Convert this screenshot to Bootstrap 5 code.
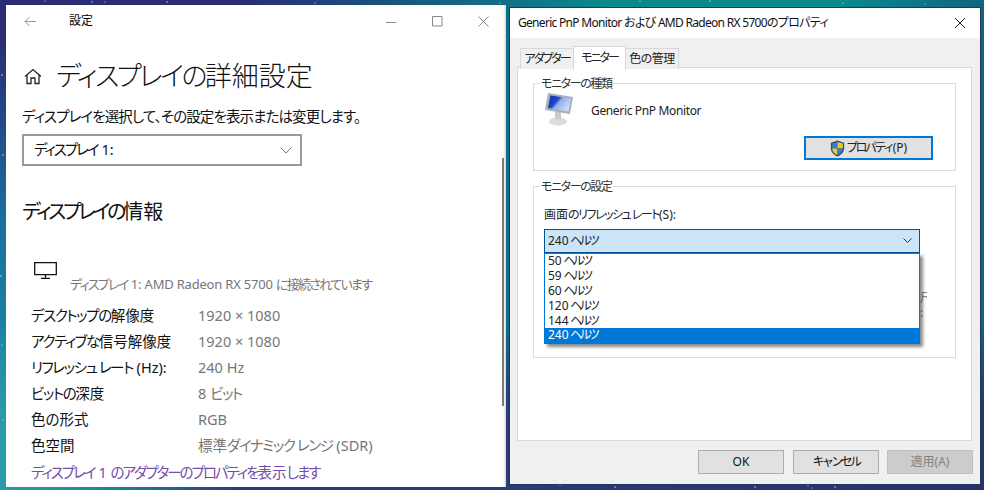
<!DOCTYPE html>
<html lang="ja">
<head>
<meta charset="utf-8">
<link href="https://cdn.jsdelivr.net/npm/bootstrap@5.3.0/dist/css/bootstrap.min.css" rel="stylesheet">
<style>
html,body{height:100%;margin:0;overflow:hidden}
body{width:984px;height:490px;position:relative;font-family:"Noto Sans","Noto Sans CJK JP",sans-serif;font-feature-settings:"palt";color:#000;
background:
linear-gradient(180deg,transparent 8%,#1a6f9e 45%,#1d86a4 75%) 0 0/8px 100% no-repeat,
linear-gradient(90deg,#2a2c74 0,#2a2c74 24%,#1b4f7c 38%,#0a8a8c 62%,#0b8a8e 85%,#10647f 100%)}
.desk-bottom{position:absolute;left:0;right:0;bottom:0;height:170px;background:linear-gradient(90deg,#2a9aa8 0,#1f8a9c 10%,#2a3f7a 24%,#2e2f70 100%);-webkit-mask-image:linear-gradient(180deg,transparent 0,#000 55%);mask-image:linear-gradient(180deg,transparent 0,#000 55%)}
.desk-stars{position:absolute;inset:0}
.win{position:absolute;background:#fff;display:flex;flex-direction:column}
.win-settings{left:6px;top:5px;width:500px;height:482px;box-shadow:inset -3px 0 3px -2px #ccc}
.win-dialog{left:510px;top:8px;width:470px;height:476px;background:#f0f0f0;box-shadow:0 0 0 1px #1d3a55}
.set-title{height:32px;padding-left:18px;font-size:12px}
.set-title .ttl{margin-left:33px}
.caps{margin-left:auto;gap:0}
.cap-btn{width:46px;height:32px;display:flex;align-items:center;justify-content:center}
.set-body{padding:0 0 0 16px;flex:1}
.set-h1{font-size:27px;font-weight:300;line-height:36px;margin:21px 0 0;color:#111;display:flex;align-items:center}
.set-h1 svg{margin-right:14px;margin-left:2px}
.set-h1 .kn{letter-spacing:-2.6px}
.set-p{font-size:14.5px;line-height:20px;margin:12px 0 0;color:#111;letter-spacing:-.9px}
.set-select{width:280px;height:32px;border:2px solid #999;margin-top:8px;padding:0 8px 0 10px;font-size:14.5px;color:#111}
.set-select .kn{letter-spacing:-2px}
.set-h2{font-size:20px;font-weight:400;line-height:28px;margin:32px 0 0;color:#111}
.set-h2 .kn{letter-spacing:-3.2px}
.mon-line{margin:36px 0 0 12px;height:36px;position:relative}
.mon-text{font-size:13px;color:#767676;padding:13px 0 0 36px;line-height:18px;margin:0;letter-spacing:-.2px}
.mon-text .kn{letter-spacing:-1.7px}
.spec{margin:4px 0 0 9px;font-size:14.5px;line-height:26px}
.spec-row{display:flex;height:26px}
.spec-k{width:167px;color:#111}
.spec-k .kn,.spec-v .kn{letter-spacing:-1.4px}
.spec-v{color:#767676}
.set-link{display:block;margin:1px 0 0 9px;font-size:14.5px;line-height:26px;color:#744da9;text-decoration:none}
.set-link .kn{letter-spacing:-2px}
.scroll-thumb{position:absolute;left:496px;top:153px;width:2px;height:248px;background:#7a7a7a}
.dlg-title{height:30px;background:#fff;font-size:12px;padding-left:8px;color:#111;letter-spacing:-.7px}
.dlg-close{margin-left:auto;margin-right:13px}
.dlg-main{flex:1;padding:8px 8px 0 7px;position:relative}
.nav-tabs.tabbar{border-bottom:0;height:22px;padding-left:3px;align-items:flex-end;font-size:12px;position:relative;z-index:2;margin-bottom:-1px}
.tabbar .nav-link{padding:0;width:54px;text-align:center;height:21px;line-height:20px;color:#222;background:#f0f0f0;border:1px solid #d9d9d9;border-bottom:0;border-radius:0;margin:0 0 1px 0;letter-spacing:-.5px}
.tabbar .kn{letter-spacing:-2.1px}
.tabbar .nav-link.active{width:53px;height:24px;line-height:22px;background:#fff;border-color:#d9d9d9;margin:0 -1px 0 -1px;position:relative;z-index:1;color:#222}
.tab-page{height:374px;background:#fff;border:1px solid #d9d9d9;padding:6px 15px 0 15px}
.grp{border:1px solid #dcdcdc;padding:0 10px;margin:0;font-size:12px}
.grp legend{float:none;width:auto;font-size:12px;line-height:16px;margin:0 0 0 -4px;padding:2px 1px 0;color:#333;letter-spacing:-1.4px}
.grp-a{height:97px}
.grp-b{height:181px;margin-top:6px;position:relative}
.mon-row{display:flex;align-items:center;gap:18px;margin-top:-1px;height:36px;font-size:12px;color:#222;padding-left:1px;letter-spacing:-.35px}
.mon-row span{padding-top:4px}
.prop-btn{width:129px;height:24px;border:2px solid #0078d7;border-radius:0;background:#e1e1e1;padding:0;font-size:12px;line-height:18px;color:#222;margin:9px 0 0 260px;display:flex;align-items:center;justify-content:center;gap:1px}
.prop-btn .kn{letter-spacing:-2.5px}
.rate-lbl{margin:12px 0 0;line-height:16px;color:#222}
.rate-lbl .kn{letter-spacing:-1.5px}
.combo{width:376px;height:24px;margin-top:6px;background:#cce4f7;border:1px solid #005499;padding:0 7px 0 3px;color:#222;font-size:12px;word-spacing:-1.5px}
.hz{letter-spacing:-2.5px}
.drop{position:absolute;left:10px;top:58px;width:376px;margin-top:0;border:1px solid #0078d7;border-radius:0;background:#fff;box-shadow:3px 3px 3px rgba(0,0,0,.45);z-index:3}
.drop .list-group-item{border:0;border-radius:0;padding:0 0 0 3px;height:15px;line-height:13px;font-size:12px;color:#222;background:transparent;word-spacing:-1.5px}
.drop .list-group-item.active{background:#0078d7;color:#fff}
.behind{position:absolute;left:386px;top:95px;font-size:12px;line-height:15px;color:#8a8a8a;width:7px;overflow:hidden;white-space:nowrap}
.dlg-foot{height:43px;padding:9px 0 0 0;gap:8px;justify-content:flex-end;margin-right:-1px}
.wbtn{width:86px;height:24px;padding:0;border:1px solid #adadad;border-radius:0;background:#e1e1e1;font-size:12px;line-height:20px;color:#111}
.wbtn .kn{letter-spacing:-2.6px}
.wbtn-ok{margin-right:1px}
.wbtn.btn:disabled{background:#ccc;border-color:#bfbfbf;color:#838383;opacity:1}
</style>
</head>
<body>
<div class="desk-bottom"></div>
<svg class="desk-stars" width="984" height="490" viewBox="0 0 984 490" fill="#cfe6ff">
<circle cx="45" cy="1" r=".6"/><circle cx="92" cy="2" r=".7"/><circle cx="105" cy="2" r=".6"/><circle cx="167" cy="2" r=".7"/><circle cx="315" cy="3" r=".6"/><circle cx="500" cy="3" r=".6"/><circle cx="640" cy="1" r=".6"/><circle cx="710" cy="1" r=".7"/><circle cx="843" cy="3" r=".6"/><circle cx="925" cy="4" r=".6"/>
<circle cx="2" cy="75" r=".7"/><circle cx="3" cy="155" r=".7"/><circle cx="1" cy="276" r=".7"/><circle cx="2" cy="345" r=".6"/><circle cx="3" cy="420" r=".6"/>
<circle cx="560" cy="485" r=".6"/><circle cx="615" cy="487" r=".7"/><circle cx="755" cy="487" r=".7"/><circle cx="808" cy="485" r=".7"/><circle cx="812" cy="488" r=".6"/><circle cx="835" cy="487" r=".7"/>
</svg>

<section class="win win-settings">
  <div class="set-title d-flex align-items-center">
    <svg width="12" height="11" viewBox="0 0 12 11" fill="none" stroke="#999" stroke-width="1"><path d="M12 5.500H1M5.500 1 1 5.500 5.500 10"/></svg>
    <span class="ttl">設定</span>
    <div class="caps d-flex">
      <div class="cap-btn"><svg width="11" height="11" fill="none" stroke="#888"><path d="M0 6.500h10"/></svg></div>
      <div class="cap-btn"><svg width="11" height="11" fill="none" stroke="#888"><path d="M.5.500h9.500v9.500h-9.500z"/></svg></div>
      <div class="cap-btn"><svg width="11" height="11" fill="none" stroke="#888"><path d="M.5.500l10 10M10.500.500l-10 10"/></svg></div>
    </div>
  </div>
  <div class="set-body">
    <h1 class="set-h1"><svg width="18" height="17" viewBox="0 0 18 17" fill="none" stroke="#222" stroke-width="1.300"><path d="M1 8.500 9 1.500l8 7M3 7v8.500h4V10h4v5.500h4V7"/></svg><span><span class="kn">ディスプレイの</span>詳細設定</span></h1>
    <p class="set-p">ディスプレイを選択して、その設定を表示または変更します。</p>
    <div class="set-select d-flex align-items-center justify-content-between">
      <span><span class="kn">ディスプレイ</span> 1:</span>
      <svg width="12" height="7" viewBox="0 0 12 7" fill="none" stroke="#777"><path d="M.5.500 6 6 11.500.5"/></svg>
    </div>
    <h2 class="set-h2"><span class="kn">ディスプレイの</span>情報</h2>
    <div class="mon-line">
      <svg class="d-block position-absolute top-0 start-0" width="23" height="17" viewBox="0 0 23 17" fill="none" stroke="#111" stroke-width="1.300"><path d="M.7.700h21.600v12H.7zM11.500 13v3M7 16.300h9"/></svg>
      <p class="mon-text"><span class="kn">ディスプレイ</span> 1: AMD Radeon RX 5700 <span class="kn">に接続されています</span></p>
    </div>
    <div class="spec">
      <div class="spec-row"><span class="spec-k"><span class="kn">デスクトップの</span>解像度</span><span class="spec-v">1920 × 1080</span></div>
      <div class="spec-row"><span class="spec-k"><span class="kn">アクティブな</span>信号解像度</span><span class="spec-v">1920 × 1080</span></div>
      <div class="spec-row"><span class="spec-k"><span class="kn">リフレッシュ レート</span> (Hz):</span><span class="spec-v">240 Hz</span></div>
      <div class="spec-row"><span class="spec-k"><span class="kn">ビットの</span>深度</span><span class="spec-v">8 <span class="kn">ビット</span></span></div>
      <div class="spec-row"><span class="spec-k">色の形式</span><span class="spec-v">RGB</span></div>
      <div class="spec-row"><span class="spec-k">色空間</span><span class="spec-v">標準<span class="kn">ダイナミック レンジ</span> (SDR)</span></div>
    </div>
    <a class="set-link" href="#"><span class="kn">ディスプレイ</span> 1 <span class="kn">のアダプターのプロパティを</span>表示<span class="kn">します</span></a>
  </div>
  <div class="scroll-thumb"></div>
</section>

<section class="win win-dialog">
  <div class="dlg-title d-flex align-items-center">
    <span>Generic PnP Monitor および AMD Radeon RX 5700のプロパティ</span>
    <svg class="dlg-close" width="13" height="13" viewBox="0 0 13 13" fill="none" stroke="#222"><path d="M1 1l10 10M11 1 1 11"/></svg>
  </div>
  <div class="dlg-main">
    <ul class="nav nav-tabs tabbar">
      <li class="nav-item"><a class="nav-link" href="#"><span class="kn">アダプター</span></a></li>
      <li class="nav-item"><a class="nav-link active" href="#"><span class="kn">モニター</span></a></li>
      <li class="nav-item"><a class="nav-link" href="#">色の管理</a></li>
    </ul>
    <div class="tab-page">
      <fieldset class="grp grp-a">
        <legend>モニターの種類</legend>
        <div class="mon-row">
          <svg width="28" height="33" viewBox="0 0 28 33">
            <defs><linearGradient id="scr" x1="0" y1="0" x2="1" y2=".6"><stop offset="0" stop-color="#0a2fb0"/><stop offset=".42" stop-color="#1b49c8"/><stop offset=".55" stop-color="#8fb0ea"/><stop offset="1" stop-color="#cfdcf5"/></linearGradient></defs>
            <ellipse cx="13" cy="28.500" rx="9" ry="4" fill="#dcdcdc"/><path d="M10 19h6v7h-6z" fill="#c9c9c9"/>
            <path d="M3 0 28 4 25 21 0 17z" fill="#a9b0b8"/><path d="M5.500 2.500 26 5.500 23.500 18.500 3 15z" fill="url(#scr)"/>
          </svg>
          <span>Generic PnP Monitor</span>
        </div>
        <button type="button" class="btn prop-btn">
          <svg width="15" height="17" viewBox="0 0 15 18"><path d="M7.500.5 14.500 3v6c0 4-3.500 7-7 8.500C4 16 .5 13 .5 9V3z" fill="#2f4a68"/><path d="M7.500 2 7.500 9H1.800V3.600z" fill="#2f7fd0"/><path d="M7.500 2 13.200 3.600V9H7.500z" fill="#f4c430"/><path d="M1.800 9H7.500v7C5 15 2 13 1.800 9z" fill="#f4c430"/><path d="M7.500 9h5.700c-.2 4-3.200 6-5.700 7z" fill="#2f7fd0"/></svg>
          <span><span class="kn">プロパティ</span>(P)</span>
        </button>
      </fieldset>
      <fieldset class="grp grp-b">
        <legend>モニターの設定</legend>
        <div class="rate-lbl">画面<span class="kn">のリフレッシュ レート</span>(S):</div>
        <div class="combo d-flex align-items-center justify-content-between">
          <span>240 <span class="hz">ヘルツ</span></span>
          <svg width="9" height="6" viewBox="0 0 9 6" fill="none" stroke="#333"><path d="M.5.500 4.500 4.500 8.500.5"/></svg>
        </div>
        <ul class="list-group drop">
          <li class="list-group-item">50 <span class="hz">ヘルツ</span></li>
          <li class="list-group-item">59 <span class="hz">ヘルツ</span></li>
          <li class="list-group-item">60 <span class="hz">ヘルツ</span></li>
          <li class="list-group-item">120 <span class="hz">ヘルツ</span></li>
          <li class="list-group-item">144 <span class="hz">ヘルツ</span></li>
          <li class="list-group-item active">240 <span class="hz">ヘルツ</span></li>
        </ul>
        <div class="behind">尺<br>:</div>
      </fieldset>
    </div>
    <div class="dlg-foot d-flex">
      <button type="button" class="btn wbtn wbtn-ok">OK</button>
      <button type="button" class="btn wbtn"><span class="kn">キャンセル</span></button>
      <button type="button" class="btn wbtn" disabled>適用(A)</button>
    </div>
  </div>
</section>
<script src="https://cdn.jsdelivr.net/npm/bootstrap@5.3.0/dist/js/bootstrap.bundle.min.js"></script>
</body>
</html>
